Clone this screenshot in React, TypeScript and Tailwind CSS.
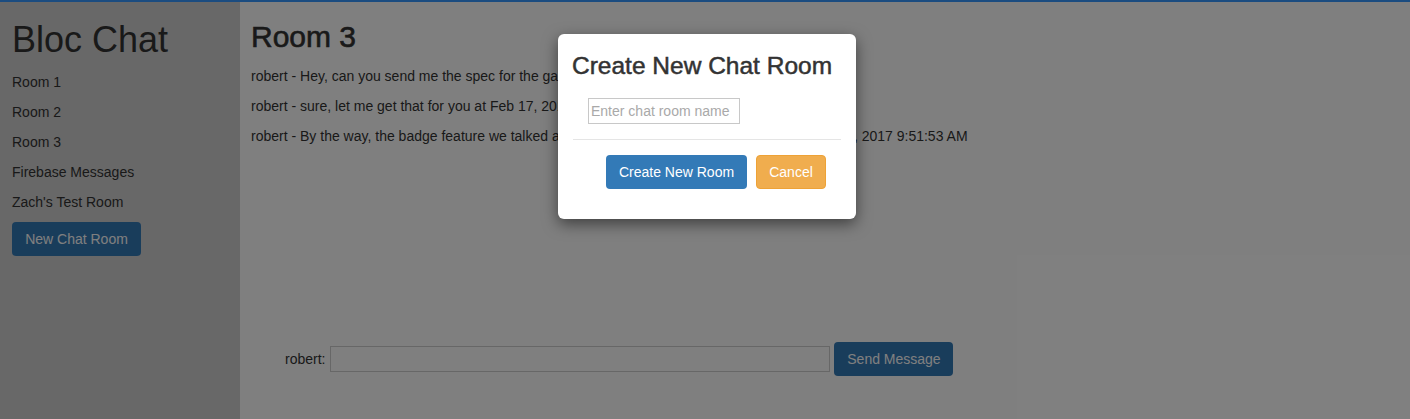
import React, { useState } from 'react';

interface Message {
  user: string;
  content: string;
  sentAt: string;
}

const rooms = ['Room 1', 'Room 2', 'Room 3', 'Firebase Messages', "Zach's Test Room"];

const messages: Message[] = [
  { user: 'robert', content: 'Hey, can you send me the spec for the game', sentAt: 'Feb 17, 2017 9:50:12 AM' },
  { user: 'robert', content: 'sure, let me get that for you', sentAt: 'Feb 17, 2017 9:50:40 AM' },
  { user: 'robert', content: 'By the way, the badge feature we talked about yesterday is finished and tested!', sentAt: 'Feb 17, 2017 9:51:53 AM' },
];

const font = { fontFamily: '"Liberation Sans", Arial, Helvetica, sans-serif' };

const App: React.FC = () => {
  const [roomName, setRoomName] = useState('');
  const [draft, setDraft] = useState('');

  return (
    <div className="relative flex h-[419px] w-full flex-col bg-white text-[14px] text-[#333]" style={font}>
      {/* Top accent */}
      <div className="relative z-50 h-[2px] w-full bg-[#1b4c80]" />

      <div className="flex flex-1">
        {/* Sidebar */}
        <aside className="flex w-[240px] flex-col bg-[#d0d0d0] px-3">
          <h1 className="mt-[18px] mb-3 text-[36px] leading-[1.1]">Bloc Chat</h1>
          <ul>
            {rooms.map((room) => (
              <li key={room} className="mb-[10px] leading-5">{room}</li>
            ))}
          </ul>
          <button className="h-[34px] w-[129px] rounded-[4px] bg-[#337ab7] text-[14px] leading-5 text-white">
            New Chat Room
          </button>
        </aside>

        {/* Main chat */}
        <main className="flex flex-1 flex-col pl-[11px]">
          <h2 className="mt-[18px] mb-[13px] text-[30px] font-medium leading-[1.1] [-webkit-text-stroke:0.6px]">Room 3</h2>
          {messages.map((m, i) => (
            <p key={i} className="mb-[10px] leading-5">
              {m.user} - {m.content} at {m.sentAt}
            </p>
          ))}
          <form className="mt-auto mb-[43px] ml-[34px] flex items-center" onSubmit={(e) => e.preventDefault()}>
            <label className="leading-5">robert:</label>
            <input
              value={draft}
              onChange={(e) => setDraft(e.target.value)}
              className="ml-[5px] h-[26px] w-[500px] border border-[#cfcfcf] bg-white px-1 outline-none"
            />
            <button
              type="submit"
              className="ml-1 h-[34px] w-[119px] rounded-[4px] bg-[#337ab7] text-[14px] leading-5 text-white"
            >
              Send Message
            </button>
          </form>
        </main>
      </div>

      {/* Modal backdrop */}
      <div className="absolute inset-0 z-40 flex items-start justify-center bg-black/50 pt-[34px]">
        <div className="ml-[4px] w-[298px] rounded-[6px] bg-white px-[15px] pt-[19px] pb-[30px] shadow-[0_5px_15px_rgba(0,0,0,0.5)]">
          <h3 className="-ml-px text-[24.5px] font-medium leading-[1.1] text-[#333] [-webkit-text-stroke:0.5px]">Create New Chat Room</h3>
          <input
            value={roomName}
            onChange={(e) => setRoomName(e.target.value)}
            placeholder="Enter chat room name"
            className="mt-[18px] ml-[15px] block h-[26px] w-[152px] border border-[#c8c8c8] px-[2px] text-[14px] outline-none placeholder:text-[#a9a9a9]"
          />
          <div className="mt-[15px] border-t border-[#e5e5e5]" />
          <div className="mt-[15px] ml-[33px] flex gap-[9px]">
            <button className="h-[34px] w-[141px] rounded-[4px] bg-[#337ab7] text-[14px] leading-5 text-white">
              Create New Room
            </button>
            <button className="h-[34px] w-[70px] rounded-[4px] border border-[#eea236] bg-[#f0ad4e] text-[14px] leading-5 text-white">
              Cancel
            </button>
          </div>
        </div>
      </div>
    </div>
  );
};

export default App;
